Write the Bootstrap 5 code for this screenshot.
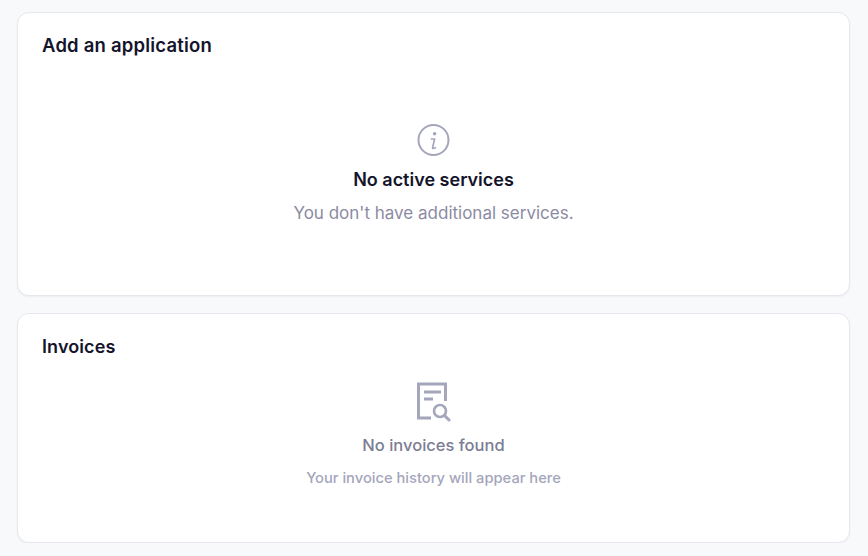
<!DOCTYPE html>
<html lang="en">
  <head>
    <meta charset="UTF-8" />
    <meta name="viewport" content="width=device-width, initial-scale=1" />
    <title>Services</title>
    <link
      href="https://cdn.jsdelivr.net/npm/bootstrap@5.3.0/dist/css/bootstrap.min.css"
      rel="stylesheet"
    />
    <style>
      body {
        background-color: #f8f9fb;
        font-family: Inter, "Noto Sans", sans-serif;
        color: #14142b;
      }
      .page-wrap {
        padding: 12px 18px 0 17px;
      }
      .panel-card {
        border: 1px solid #e6e8ee;
        border-radius: 12px;
        box-shadow: 0 1px 2px rgba(20, 20, 43, 0.05);
        padding: 19px 24px 0;
      }
      .panel-apps {
        height: 284px;
        margin-bottom: 17px;
      }
      .panel-invoices {
        height: 230px;
        padding-top: 20px;
      }
      .panel-title {
        font-size: 18.5px;
        letter-spacing: 0.1px;
        line-height: 26px;
        font-weight: 600;
        margin: 0;
        color: #14142b;
      }
      .panel-invoices .panel-title {
        font-size: 18px;
      }
      .panel-apps .panel-title {
        letter-spacing: 0.2px;
      }
      .apps-empty {
        padding-top: 65px;
      }
      .apps-empty h6 {
        font-size: 18px;
        line-height: 26px;
        font-weight: 600;
        margin: 10px 0 8px;
        color: #14142b;
      }
      .apps-empty p {
        font-size: 17px;
        line-height: 24px;
        color: #8b8ba3;
        margin: 0;
      }
      .invoices-empty {
        padding-top: 22px;
      }
      .invoices-empty h6 {
        font-size: 16.5px;
        line-height: 24px;
        font-weight: 500;
        color: #7c7c94;
        margin: 11px 0 10px;
      }
      .invoices-empty p {
        font-size: 14.7px;
        line-height: 22px;
        font-weight: 500;
        color: #a4a6bb;
        margin: 0;
      }
    </style>
  </head>
  <body>
    <div class="page-wrap">
      <!-- Add an application -->
      <div class="card panel-card panel-apps">
        <h5 class="panel-title">Add an application</h5>
        <div class="apps-empty d-flex flex-column align-items-center text-center">
          <svg width="34" height="34" viewBox="0 0 34 34" fill="none">
            <circle cx="16.5" cy="17" r="15" stroke="#a4a6bb" stroke-width="2" />
            <circle cx="17.6" cy="10.8" r="1.8" fill="#a4a6bb" />
            <path d="M14.4 16h3.2l-2 8.6c-.2 1 .9 1.1 2.7.1" stroke="#a4a6bb" stroke-width="1.7" stroke-linecap="round" stroke-linejoin="round" />
          </svg>
          <h6>No active services</h6>
          <p>You don't have additional services.</p>
        </div>
      </div>

      <!-- Invoices -->
      <div class="card panel-card panel-invoices">
        <h5 class="panel-title">Invoices</h5>
        <div class="invoices-empty d-flex flex-column align-items-center text-center">
          <svg width="36" height="40" viewBox="0 0 36 40" fill="none">
            <path d="M15 36H2.500V2h27v17" stroke="#a4a6bb" stroke-width="3" />
            <path d="M8 10h17M8 17h9" stroke="#a4a6bb" stroke-width="3" />
            <circle cx="24" cy="29" r="6" stroke="#a4a6bb" stroke-width="2.6" />
            <path d="M28.500 33.500l4.500 4.500" stroke="#a4a6bb" stroke-width="3" stroke-linecap="round" />
          </svg>
          <h6>No invoices found</h6>
          <p>Your invoice history will appear here</p>
        </div>
      </div>
    </div>
    <script src="https://cdn.jsdelivr.net/npm/bootstrap@5.3.0/dist/js/bootstrap.bundle.min.js"></script>
  </body>
</html>
